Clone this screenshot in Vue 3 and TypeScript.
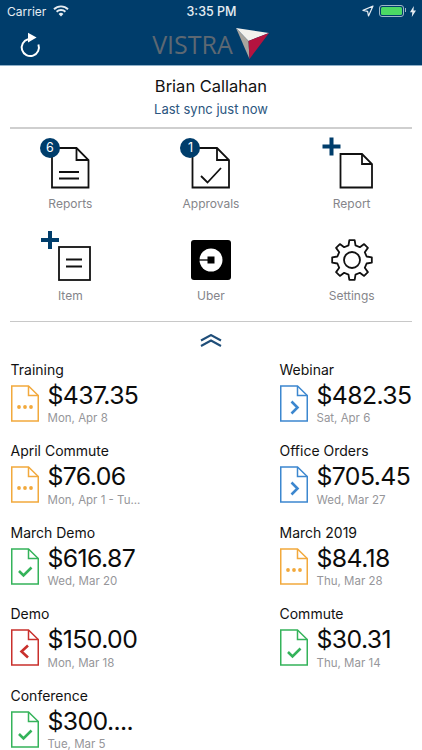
<script setup lang="ts">
type Status = 'pending' | 'submitted' | 'approved' | 'returned'

interface Report {
  title: string
  amount: string
  date: string
  status: Status
}

const reports: Report[] = [
  { title: 'Training', amount: '$437.35', date: 'Mon, Apr 8', status: 'pending' },
  { title: 'Webinar', amount: '$482.35', date: 'Sat, Apr 6', status: 'submitted' },
  { title: 'April Commute', amount: '$76.06', date: 'Mon, Apr 1 - Tu...', status: 'pending' },
  { title: 'Office Orders', amount: '$705.45', date: 'Wed, Mar 27', status: 'submitted' },
  { title: 'March Demo', amount: '$616.87', date: 'Wed, Mar 20', status: 'approved' },
  { title: 'March 2019', amount: '$84.18', date: 'Thu, Mar 28', status: 'pending' },
  { title: 'Demo', amount: '$150.00', date: 'Mon, Mar 18', status: 'returned' },
  { title: 'Commute', amount: '$30.31', date: 'Thu, Mar 14', status: 'approved' },
  { title: 'Conference', amount: '$300....', date: 'Tue, Mar 5', status: 'approved' },
]

// 8 toothed gear outline around 0,0
function gearPath(): string {
  const teeth = 8
  const outer = 20
  const inner = 15
  const pts: string[] = []
  for (let i = 0; i < teeth; i++) {
    const a = (i * Math.PI * 2) / teeth - Math.PI / 2
    const step = (Math.PI * 2) / teeth
    const list: Array<[number, number]> = [
      [inner, a - step * 0.3],
      [outer, a - step * 0.17],
      [outer, a + step * 0.17],
      [inner, a + step * 0.3],
    ]
    for (const [r, t] of list) {
      pts.push(`${(r * Math.cos(t)).toFixed(2)} ${(r * Math.sin(t)).toFixed(2)}`)
    }
  }
  return 'M' + pts.join('L') + 'Z'
}

const gear = gearPath()
</script>

<template>
  <div class="app">
    <header class="header">
      <div class="status">
        <div class="status__left">
          <span>Carrier</span>
          <svg width="16" height="12" viewBox="0 0 16 12">
            <path d="M1 4.2a10 10 0 0 1 14 0" fill="none" stroke="#e6edf2" stroke-width="1.9" />
            <path d="M3.6 6.8a6.4 6.4 0 0 1 8.8 0" fill="none" stroke="#e6edf2" stroke-width="1.9" />
            <path d="M8 11.4 5.6 8.9a3.4 3.4 0 0 1 4.8 0Z" fill="#e6edf2" />
          </svg>
        </div>
        <span class="status__time">3:35 PM</span>
        <div class="status__right">
          <svg width="12" height="12" viewBox="0 0 12 12">
            <path d="M11 1 1 5.4l4.6.9.9 4.7Z" fill="none" stroke="#e6edf2" stroke-width="1.2" stroke-linejoin="round" />
          </svg>
          <div class="battery"><div class="battery__fill"></div></div>
          <svg width="6" height="11" viewBox="0 0 6 11">
            <path d="M3.8 0 0 6.2h2.3L1.8 11 6 4.6H3.5Z" fill="#e6edf2" />
          </svg>
        </div>
      </div>
      <div class="nav">
        <svg class="nav__refresh" width="22" height="26" viewBox="0 0 22 26">
          <path d="M19.4 12.5A8.6 8.6 0 1 1 9 7.2" fill="none" stroke="#fff" stroke-width="2" />
          <path d="M9 0.8 17.6 5.6 9 10.4Z" fill="#fff" />
        </svg>
        <div class="logo">
          <span class="logo__text">VISTRA</span>
          <svg width="34" height="32" viewBox="0 0 34 32">
            <path d="M0 0 33 5 12.5 13Z" fill="#f2f1ee" />
            <path d="M0 0 12.5 13 13.5 31Z" fill="#a8a49e" />
            <path d="M12.5 13 33 5 13.5 31Z" fill="#b5133f" />
          </svg>
        </div>
      </div>
    </header>

    <section class="user">
      <h1 class="user__name">Brian Callahan</h1>
      <p class="user__sync">Last sync just now</p>
    </section>

    <nav class="actions">
      <div class="action">
        <div class="action__icon">
          <svg width="62" height="52" viewBox="0 0 62 52">
            <path d="M13 11H37.5L49.5 23V50.5H13Z" class="line" />
            <path d="M37.5 11V23H49.5" class="line" />
            <path d="M20 35H40M20 41.5H40" class="line" />
          </svg>
          <span class="badge">6</span>
        </div>
        <span class="action__label">Reports</span>
      </div>
      <div class="action">
        <div class="action__icon">
          <svg width="62" height="52" viewBox="0 0 62 52">
            <path d="M12.5 11H37L49 23V50.5H12.5Z" class="line" />
            <path d="M37 11V23H49" class="line" />
            <path d="M21 39 27.5 45.5 41 31" class="line" />
          </svg>
          <span class="badge">1</span>
        </div>
        <span class="action__label">Approvals</span>
      </div>
      <div class="action">
        <div class="action__icon">
          <svg width="62" height="52" viewBox="0 0 62 52">
            <path d="M1.5 9.5H19.5M10.5 .5V18.5" class="plus" />
            <path d="M19.5 17H41L51 27V50.5H19.5Z" class="line" />
            <path d="M41 17V27H51" class="line" />
          </svg>
        </div>
        <span class="action__label">Report</span>
      </div>
      <div class="action">
        <div class="action__icon">
          <svg width="62" height="52" viewBox="0 0 62 52">
            <path d="M2 11H20M11 2V20" class="plus" />
            <rect x="20" y="18" width="31" height="33" class="line" />
            <path d="M27 30.5H43M27 37.5H43" class="line" />
          </svg>
        </div>
        <span class="action__label">Item</span>
      </div>
      <div class="action">
        <div class="action__icon">
          <svg width="62" height="52" viewBox="0 0 62 52">
            <rect x="11" y="11" width="40" height="40" rx="3" fill="#000" />
            <circle cx="31" cy="31" r="11.5" fill="#fff" />
            <rect x="27.5" y="27.5" width="7" height="7" fill="#000" />
            <path d="M19 31H28" stroke="#000" stroke-width="1.3" />
          </svg>
        </div>
        <span class="action__label">Uber</span>
      </div>
      <div class="action">
        <div class="action__icon">
          <svg width="62" height="52" viewBox="0 0 62 52">
            <path :d="gear" class="line line--round" transform="translate(31 31)" />
            <circle cx="31" cy="31" r="8" class="line" />
          </svg>
        </div>
        <span class="action__label">Settings</span>
      </div>
    </nav>

    <div class="collapse">
      <svg width="22" height="13" viewBox="0 0 22 13">
        <path d="M1 6.5 11 1 21 6.5M1 12 11 6.5 21 12" fill="none" stroke="#1f4e79" stroke-width="2" />
      </svg>
    </div>

    <section class="reports">
      <article v-for="r in reports" :key="r.title" class="report">
        <div class="report__title">{{ r.title }}</div>
        <div class="report__body">
          <svg class="report__icon" :class="`report__icon--${r.status}`" width="28" height="37" viewBox="0 0 28 37">
            <path d="M.75 1H17.5L27.25 10.5V36H.75Z" class="doc" />
            <path d="M17.5 1V10.5H27.25" class="doc" />
            <g v-if="r.status === 'pending'" class="fill">
              <circle cx="8" cy="22" r="1.9" />
              <circle cx="14" cy="22" r="1.9" />
              <circle cx="20" cy="22" r="1.9" />
            </g>
            <path v-else-if="r.status === 'submitted'" d="M11.5 16.5 17.5 22.5 11.5 28.5" class="mark" />
            <path v-else-if="r.status === 'returned'" d="M17 16.5 10.5 22.5 17 28.5" class="mark" />
            <path v-else d="M8 23 12.5 27.5 20.5 19.5" class="mark" />
          </svg>
          <div class="report__text">
            <div class="report__amount">{{ r.amount }}</div>
            <div class="report__date">{{ r.date }}</div>
          </div>
        </div>
      </article>
    </section>
  </div>
</template>

<style>
html,
body {
  margin: 0;
  background: #fff;
}
</style>

<style scoped>
.app {
  width: 422px;
  height: 750px;
  overflow: hidden;
  background: #fff;
  font-family: Inter, "Liberation Sans", sans-serif;
  color: #111;
}

.header {
  height: 65px;
  background: #003d6b;
  border-bottom: 1px solid #8fb0c8;
}

.status {
  height: 20px;
  padding: 1px 6px 0 7px;
  display: grid;
  grid-template-columns: 1fr auto 1fr;
  align-items: center;
  color: #e6edf2;
  font-size: 12px;
}

.status__left {
  display: flex;
  align-items: center;
  gap: 7px;
}

.status__time {
  font-size: 12.5px;
  font-weight: 500;
}

.status__right {
  display: flex;
  justify-content: flex-end;
  align-items: center;
  gap: 5px;
}

.battery {
  position: relative;
  width: 21px;
  height: 8px;
  padding: 1px;
  border: 1px solid #9fb6c8;
  border-radius: 3px;
  margin-right: 1px;
}

.battery::after {
  content: "";
  position: absolute;
  right: -3px;
  top: 2px;
  width: 1.5px;
  height: 4px;
  background: #9fb6c8;
}

.battery__fill {
  height: 100%;
  background: #4cd964;
  border-radius: 1.5px;
}

.nav {
  position: relative;
  height: 45px;
  display: flex;
  justify-content: center;
  align-items: center;
}

.nav__refresh {
  position: absolute;
  left: 19px;
  top: 11px;
}

.logo {
  display: flex;
  align-items: center;
  gap: 3px;
}

.logo__text {
  font-family: "Open Sans", sans-serif;
  font-size: 25px;
  font-weight: 500;
  color: #5d6872;
}

.user {
  height: 61px;
  text-align: center;
  border-bottom: 2px solid #cfcfcf;
  margin: 0 10px;
}

.user__name {
  margin: 0;
  padding-top: 10px;
  font-size: 16.5px;
  font-weight: 400;
  line-height: 21px;
}

.user__sync {
  margin: 3px 0 0;
  font-size: 13px;
  line-height: 18px;
  color: #2b5680;
}

.actions {
  display: grid;
  grid-template-columns: repeat(3, 1fr);
  grid-auto-rows: 92px;
  padding-top: 8px;
}

.action {
  display: flex;
  flex-direction: column;
  align-items: center;
}

.action__icon {
  position: relative;
  width: 62px;
  height: 52px;
}

.action__icon svg {
  display: block;
}

.action__label {
  margin-top: 7px;
  font-size: 12px;
  line-height: 16px;
  color: #85858a;
}

.badge {
  position: absolute;
  left: 0.5px;
  top: 1px;
  width: 20px;
  height: 20px;
  border-radius: 50%;
  background: #003d6b;
  color: #fff;
  font-size: 12.5px;
  line-height: 20px;
  text-align: center;
}

.line {
  fill: none;
  stroke: #111;
  stroke-width: 1.8;
}

.line--round {
  stroke-linejoin: round;
}

.plus {
  fill: none;
  stroke: #003d6b;
  stroke-width: 4;
}

.collapse {
  margin: 0 10px;
  height: 39.5px;
  display: flex;
  justify-content: center;
  padding-top: 12px;
  box-sizing: border-box;
  border-top: 1px solid #c8c8c8;
}

.reports {
  display: grid;
  grid-template-columns: 269px 1fr;
  grid-auto-rows: 81.5px;
  padding-left: 10.5px;
}

.report__title {
  font-size: 14px;
  line-height: 18px;
}

.report__body {
  display: flex;
  gap: 9px;
  margin-top: 5px;
}

.report__icon {
  flex: none;
  display: block;
  margin-top: 1px;
}

.doc {
  fill: none;
  stroke: currentColor;
  stroke-width: 1.5;
}

.mark {
  fill: none;
  stroke: currentColor;
  stroke-width: 2.6;
}

.fill {
  fill: currentColor;
}

.report__icon--pending {
  color: #f2a93c;
}

.report__icon--submitted {
  color: #3c87cf;
}

.report__icon--approved {
  color: #34b35a;
}

.report__icon--returned {
  color: #c9302c;
}

.report__amount {
  font-size: 24.8px;
  letter-spacing: -0.6px;
  line-height: 30px;
  margin-top: -4px;
  color: #0c0c0c;
}

.report__date {
  font-size: 11.5px;
  line-height: 16px;
  margin-top: 0.5px;
  color: #96969a;
}
</style>
